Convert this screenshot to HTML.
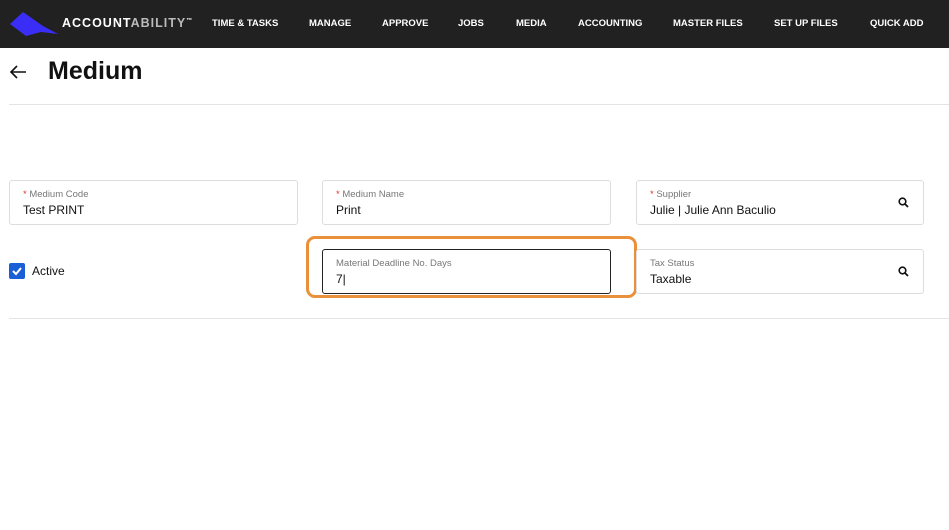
<!DOCTYPE html>
<html><head><style>
*{box-sizing:border-box;margin:0;padding:0}
body{width:949px;height:530px;background:#fff;font-family:"Liberation Sans",sans-serif;position:relative;overflow:hidden}
.nav{position:absolute;left:0;top:0;width:949px;height:48px;background:#212121}
.nav .it{position:absolute;top:18px;color:#fff;font-size:9.5px;font-weight:bold;white-space:nowrap}
.logo{position:absolute;left:62px;top:16px;color:#fff;font-weight:bold;font-size:12.5px;letter-spacing:1px}
.logo span{color:#bbb}
h1{position:absolute;left:48px;top:57px;font-size:25px;font-weight:bold;color:#111}
.hr{position:absolute;left:9px;width:940px;height:1px;background:#e4e4e4}
.f{position:absolute;border:1px solid #ddd;border-radius:3px;height:45px}
.f .l{position:absolute;left:13px;top:8px;font-size:9.5px;color:#777}
.f .l b{color:#d33;font-weight:normal}
.f .v{position:absolute;left:13px;top:22px;font-size:12px;color:#111}
.q{position:absolute;right:14px;top:16px}
</style></head><body>
<div class="nav">
<svg style="position:absolute;left:9px;top:11px" width="50" height="26" viewBox="0 0 50 26"><polygon points="1,13 14,1 34,15 49,23 32,21 17,25" fill="#3a2df5"/></svg>
<div class="logo">ACCOUNT<span>ABILITY</span><sup style="font-size:6px">™</sup></div>
<div class="it" style="left:212px">TIME &amp; TASKS</div>
<div class="it" style="left:309px">MANAGE</div>
<div class="it" style="left:382px">APPROVE</div>
<div class="it" style="left:458px">JOBS</div>
<div class="it" style="left:516px">MEDIA</div>
<div class="it" style="left:578px">ACCOUNTING</div>
<div class="it" style="left:673px">MASTER FILES</div>
<div class="it" style="left:774px">SET UP FILES</div>
<div class="it" style="left:870px">QUICK ADD</div>
</div>
<svg style="position:absolute;left:9px;top:64px" width="18" height="16" viewBox="0 0 18 16"><path d="M17 8H2M8 2L2 8l6 6" stroke="#111" stroke-width="1.6" fill="none"/></svg>
<h1>Medium</h1>
<div class="hr" style="top:104px"></div>
<div class="f" style="left:9px;top:180px;width:289px"><div class="l"><b>*</b> Medium Code</div><div class="v">Test PRINT</div></div>
<div class="f" style="left:322px;top:180px;width:289px"><div class="l"><b>*</b> Medium Name</div><div class="v">Print</div></div>
<div class="f" style="left:636px;top:180px;width:288px"><div class="l"><b>*</b> Supplier</div><div class="v">Julie | Julie Ann Baculio</div>
<svg class="q" width="11" height="11" viewBox="0 0 11 11"><circle cx="4.5" cy="4.5" r="3.3" stroke="#111" stroke-width="1.6" fill="none"/><path d="M7 7l3 3" stroke="#111" stroke-width="1.8"/></svg></div>
<div style="position:absolute;left:9px;top:263px;width:16px;height:16px;background:#1a5fd6;border-radius:2px"><svg width="16" height="16" viewBox="0 0 16 16"><path d="M4 8l3 3 5-6" stroke="#fff" stroke-width="2" fill="none"/></svg></div>
<div style="position:absolute;left:32px;top:264px;font-size:12px;color:#111">Active</div>
<div style="position:absolute;left:306px;top:236px;width:331px;height:62px;border:3px solid #e8913a;border-radius:9px"></div>
<div class="f" style="left:322px;top:249px;width:289px;border-color:#222"><div class="l">Material Deadline No. Days</div><div class="v">7|</div></div>
<div class="f" style="left:636px;top:249px;width:288px"><div class="l">Tax Status</div><div class="v">Taxable</div>
<svg class="q" width="11" height="11" viewBox="0 0 11 11"><circle cx="4.5" cy="4.5" r="3.3" stroke="#111" stroke-width="1.6" fill="none"/><path d="M7 7l3 3" stroke="#111" stroke-width="1.8"/></svg></div>
<div class="hr" style="top:318px"></div>
</body></html>
